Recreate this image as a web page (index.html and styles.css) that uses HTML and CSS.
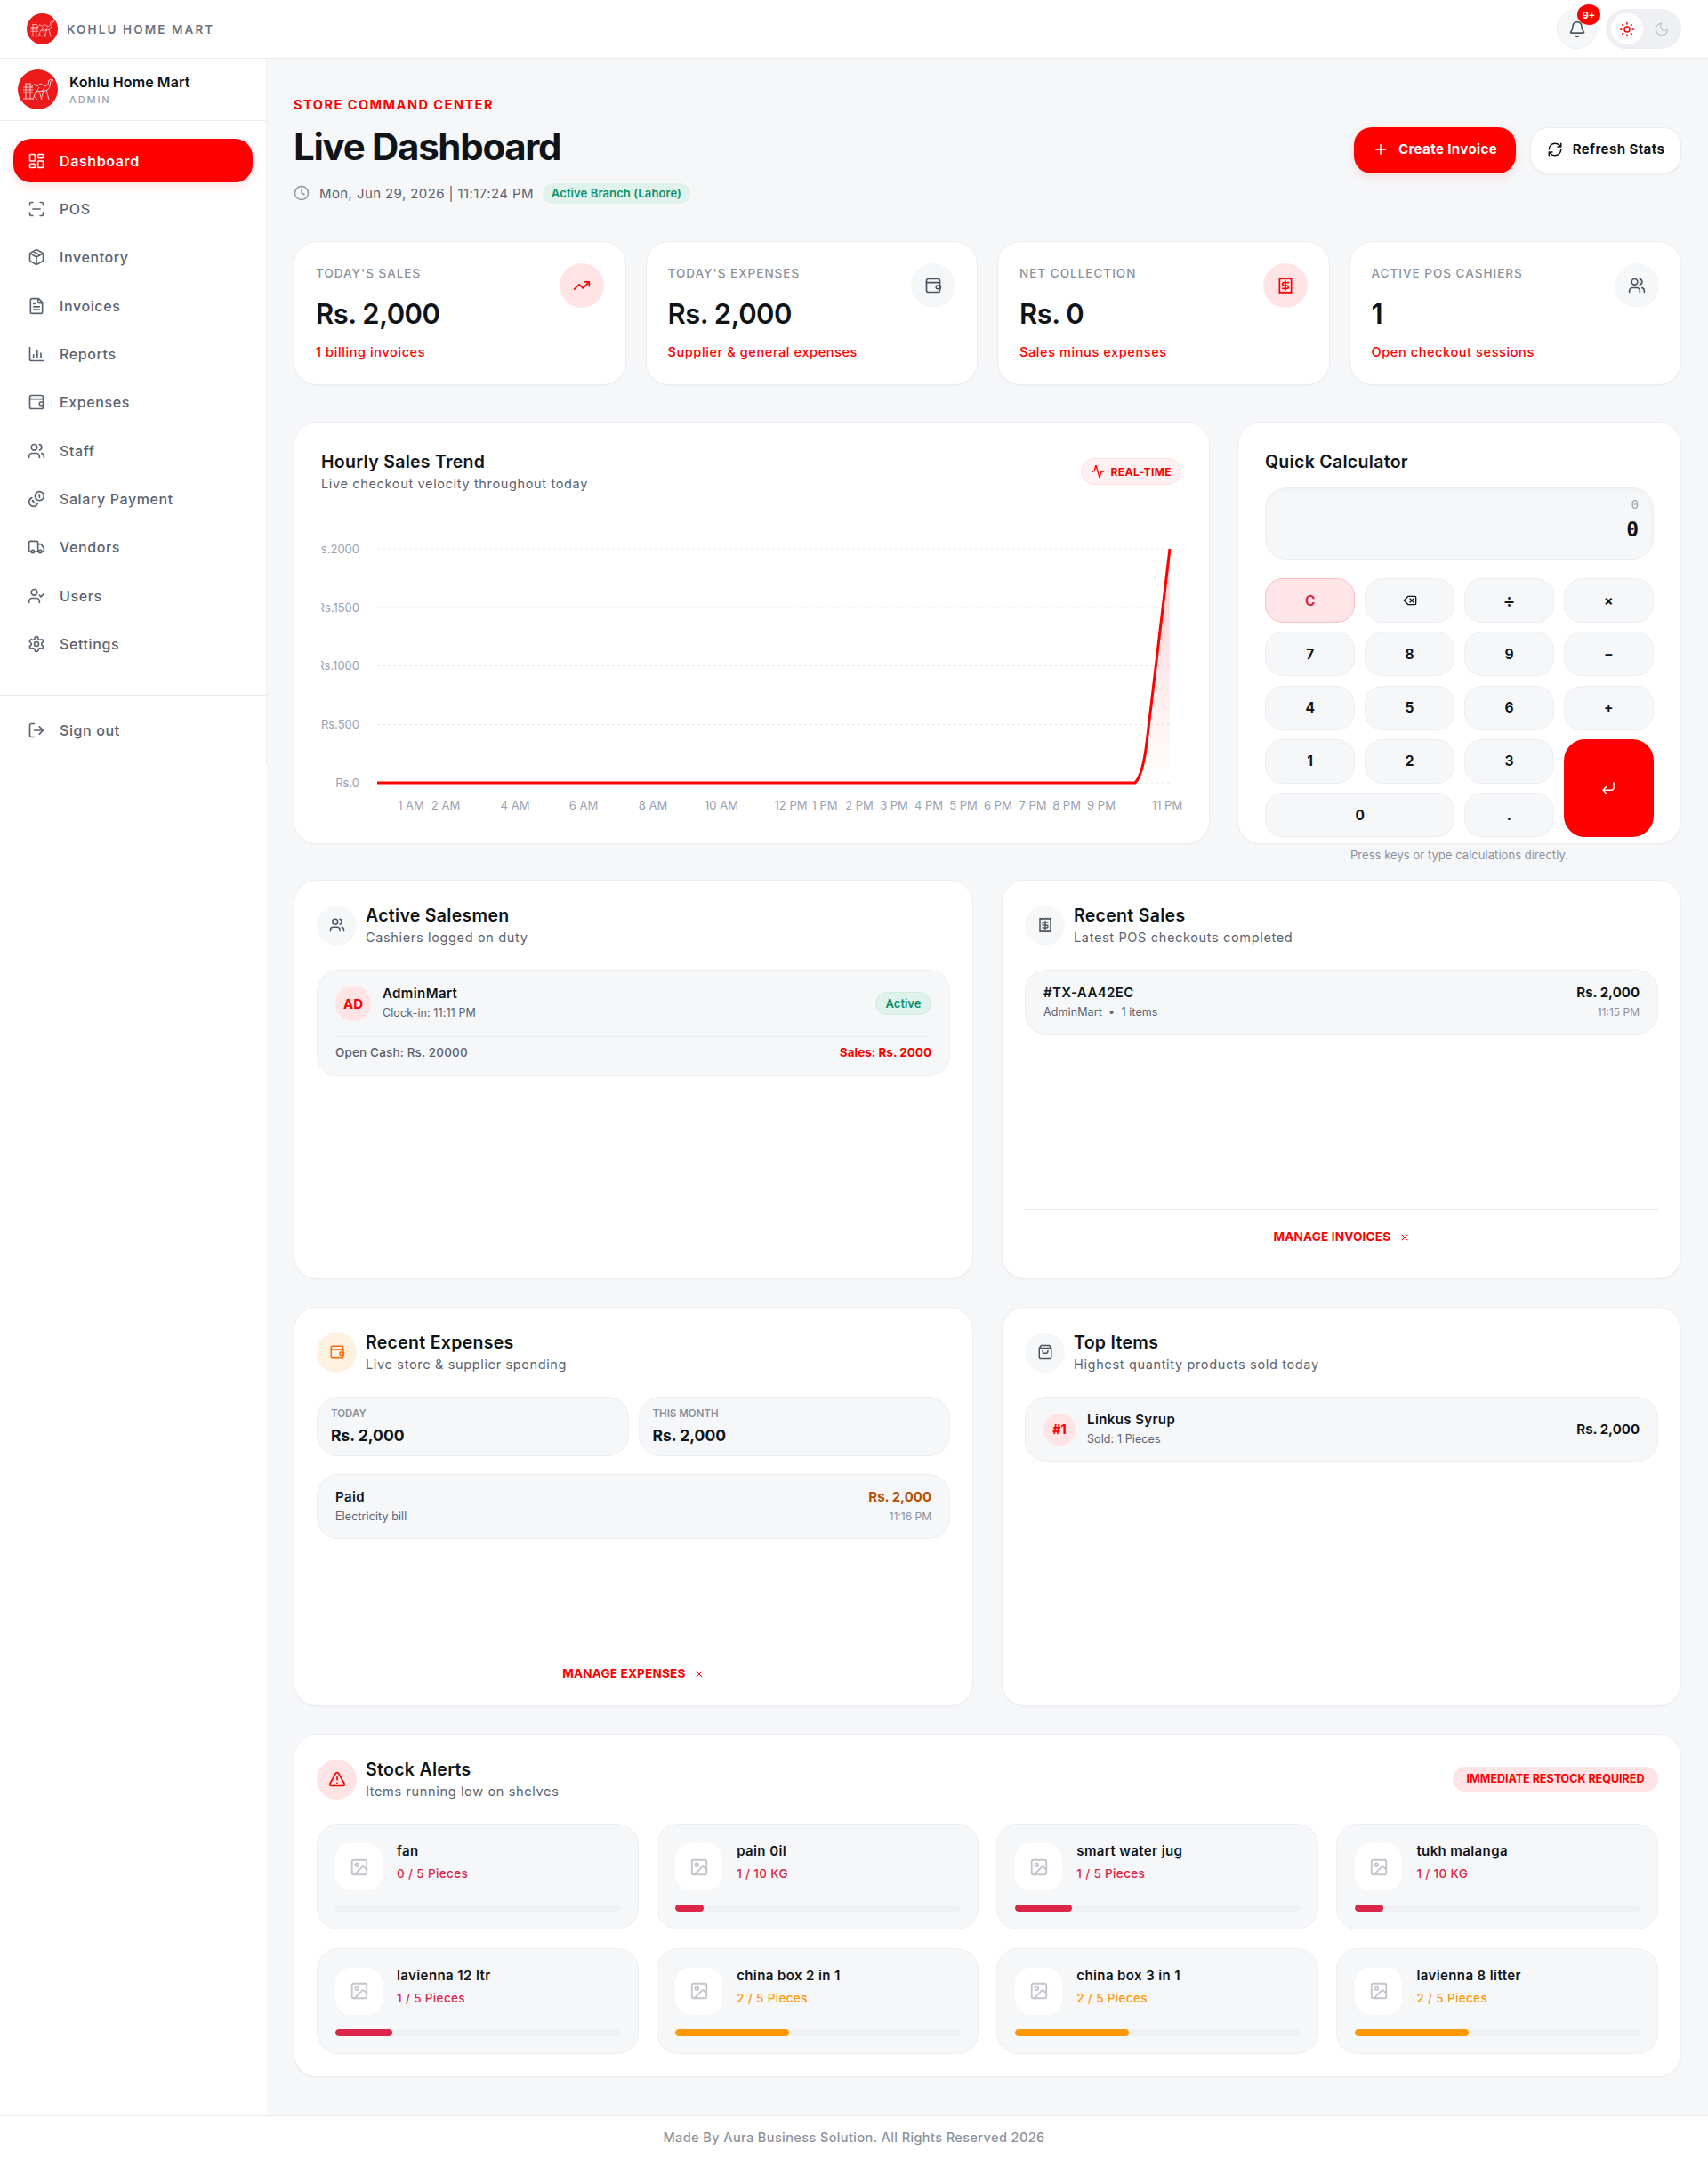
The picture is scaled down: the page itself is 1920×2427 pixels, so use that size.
FILE: index.html
```html
<!DOCTYPE html>
<html lang="en">
<head>
    <meta charset="UTF-8">
    <meta name="viewport" content="width=device-width, initial-scale=1.0">
    <title>Kohlu Home Mart - Live Dashboard</title>
    <link rel="stylesheet" href="styles.css">
</head>
<body>
    <!-- Icon sprite -->
    <svg class="sprite" xmlns="http://www.w3.org/2000/svg">
        <symbol id="i-logo" viewBox="0 0 45 45">
            <circle cx="22.5" cy="22.5" r="22.5" fill="#ec1a1a" stroke="none"/>
            <path d="M15 20q4-6 7-1q3-5 7-1q3 2 5-1l1-5 3-1 2 1-3 1-1 6q-1 4-5 5l-11 1M20 25l-3 9M24 25l3 9M29 24l-3 10M32 23l3 11M21 25l3-5M27 25l3-5M6 20h11M6 23h11M6 26h11M8 16h7M9 16v17M14 16v17M6 33h11M18 30l4 4" fill="none" stroke="#ffdede" stroke-width=".9"/>
        </symbol>
        <symbol id="i-dashboard" viewBox="0 0 24 24"><rect x="3" y="3" width="7" height="9" rx="1"/><rect x="14" y="3" width="7" height="5" rx="1"/><rect x="14" y="12" width="7" height="9" rx="1"/><rect x="3" y="16" width="7" height="5" rx="1"/></symbol>
        <symbol id="i-scan" viewBox="0 0 24 24"><path d="M3 7V5a2 2 0 0 1 2-2h2M17 3h2a2 2 0 0 1 2 2v2M21 17v2a2 2 0 0 1-2 2h-2M7 21H5a2 2 0 0 1-2-2v-2M7 12h10"/></symbol>
        <symbol id="i-package" viewBox="0 0 24 24"><path d="m7.5 4.27 9 5.15M21 8a2 2 0 0 0-1-1.73l-7-4a2 2 0 0 0-2 0l-7 4A2 2 0 0 0 3 8v8a2 2 0 0 0 1 1.73l7 4a2 2 0 0 0 2 0l7-4A2 2 0 0 0 21 16ZM3.3 7l8.7 5 8.7-5M12 22V12"/></symbol>
        <symbol id="i-file" viewBox="0 0 24 24"><path d="M15 2H6a2 2 0 0 0-2 2v16a2 2 0 0 0 2 2h12a2 2 0 0 0 2-2V7ZM14 2v4a2 2 0 0 0 2 2h4M10 9H8M16 13H8M16 17H8"/></symbol>
        <symbol id="i-chart" viewBox="0 0 24 24"><path d="M3 3v16a2 2 0 0 0 2 2h16M8 17v-4M13 17V7M18 17v-6"/></symbol>
        <symbol id="i-wallet" viewBox="0 0 24 24"><rect x="3" y="3" width="18" height="18" rx="2.5"/><path d="M3 8h18"/><rect x="16" y="12" width="6" height="4.5" rx="1.5"/></symbol>
        <symbol id="i-users" viewBox="0 0 24 24"><path d="M16 21v-2a4 4 0 0 0-4-4H6a4 4 0 0 0-4 4v2M22 21v-2a4 4 0 0 0-3-3.87M16 3.13a4 4 0 0 1 0 7.75"/><circle cx="9" cy="7" r="4"/></symbol>
        <symbol id="i-coins" viewBox="0 0 24 24"><circle cx="16" cy="8" r="6"/><path d="M5.91 10.37A6 6 0 1 0 13.66 18M15 6h1v4M7.3 13.9l-.7.7 2.8 2.8"/></symbol>
        <symbol id="i-truck" viewBox="0 0 24 24"><path d="M14 18V6a2 2 0 0 0-2-2H4a2 2 0 0 0-2 2v11a1 1 0 0 0 1 1h2M15 18H9M19 18h2a1 1 0 0 0 1-1v-3.65a1 1 0 0 0-.22-.624l-3.48-4.35A1 1 0 0 0 17.52 8H14"/><circle cx="17" cy="18" r="2"/><circle cx="7" cy="18" r="2"/></symbol>
        <symbol id="i-usercheck" viewBox="0 0 24 24"><path d="M16 21v-2a4 4 0 0 0-4-4H6a4 4 0 0 0-4 4v2M16 11l2 2 4-4"/><circle cx="9" cy="7" r="4"/></symbol>
        <symbol id="i-settings" viewBox="0 0 24 24"><path d="M12.22 2h-.44a2 2 0 0 0-2 2v.18a2 2 0 0 1-1 1.73l-.43.25a2 2 0 0 1-2 0l-.15-.08a2 2 0 0 0-2.73.73l-.22.38a2 2 0 0 0 .73 2.73l.15.1a2 2 0 0 1 1 1.72v.51a2 2 0 0 1-1 1.74l-.15.09a2 2 0 0 0-.73 2.73l.22.38a2 2 0 0 0 2.73.73l.15-.08a2 2 0 0 1 2 0l.43.25a2 2 0 0 1 1 1.73V20a2 2 0 0 0 2 2h.44a2 2 0 0 0 2-2v-.18a2 2 0 0 1 1-1.73l.43-.25a2 2 0 0 1 2 0l.15.08a2 2 0 0 0 2.73-.73l.22-.39a2 2 0 0 0-.73-2.73l-.15-.08a2 2 0 0 1-1-1.74v-.5a2 2 0 0 1 1-1.74l.15-.09a2 2 0 0 0 .73-2.73l-.22-.38a2 2 0 0 0-2.73-.73l-.15.08a2 2 0 0 1-2 0l-.43-.25a2 2 0 0 1-1-1.73V4a2 2 0 0 0-2-2z"/><circle cx="12" cy="12" r="3"/></symbol>
        <symbol id="i-logout" viewBox="0 0 24 24"><path d="M9 21H5a2 2 0 0 1-2-2V5a2 2 0 0 1 2-2h4M16 17l5-5-5-5M21 12H9"/></symbol>
        <symbol id="i-trend" viewBox="0 0 24 24"><path d="m22 7-8.5 8.5-5-5L2 17M16 7h6v6"/></symbol>
        <symbol id="i-receipt" viewBox="0 0 24 24"><path d="M4 2v20l2-1 2 1 2-1 2 1 2-1 2 1 2-1 2 1V2l-2 1-2-1-2 1-2-1-2 1-2-1-2 1ZM16 8h-6a2 2 0 1 0 0 4h4a2 2 0 1 1 0 4H8M12 18V6"/></symbol>
        <symbol id="i-bell" viewBox="0 0 24 24"><path d="M10.268 21a2 2 0 0 0 3.464 0M3.262 15.326A1 1 0 0 0 4 17h16a1 1 0 0 0 .74-1.673C19.41 13.956 18 12.499 18 8A6 6 0 0 0 6 8c0 4.499-1.411 5.956-2.738 7.326"/></symbol>
        <symbol id="i-sun" viewBox="0 0 24 24"><circle cx="12" cy="12" r="4"/><path d="M12 2v2M12 20v2M4.93 4.93l1.41 1.41M17.66 17.66l1.41 1.41M2 12h2M20 12h2M6.34 17.66l-1.41 1.41M19.07 4.93l-1.41 1.41"/></symbol>
        <symbol id="i-moon" viewBox="0 0 24 24"><path d="M12 3a6 6 0 0 0 9 9 9 9 0 1 1-9-9Z"/></symbol>
        <symbol id="i-plus" viewBox="0 0 24 24"><path d="M5 12h14M12 5v14"/></symbol>
        <symbol id="i-refresh" viewBox="0 0 24 24"><path d="M3 12a9 9 0 0 1 9-9 9.75 9.75 0 0 1 6.74 2.74L21 8M21 3v5h-5M21 12a9 9 0 0 1-9 9 9.75 9.75 0 0 1-6.74-2.74L3 16M8 16H3v5"/></symbol>
        <symbol id="i-clock" viewBox="0 0 24 24"><circle cx="12" cy="12" r="10"/><path d="M12 6v6l4 2"/></symbol>
        <symbol id="i-activity" viewBox="0 0 24 24"><path d="M22 12h-2.48a2 2 0 0 0-1.93 1.46l-2.35 8.36a.25.25 0 0 1-.48 0L9.24 2.18a.25.25 0 0 0-.48 0l-2.35 8.36A2 2 0 0 1 4.49 12H2"/></symbol>
        <symbol id="i-delete" viewBox="0 0 24 24"><path d="M20 5H9l-7 7 7 7h11a2 2 0 0 0 2-2V7a2 2 0 0 0-2-2ZM18 9l-6 6M12 9l6 6"/></symbol>
        <symbol id="i-enter" viewBox="0 0 24 24"><path d="M20 4v7a4 4 0 0 1-4 4H4M9 10l-5 5 5 5"/></symbol>
        <symbol id="i-bag" viewBox="0 0 24 24"><path d="M6 2 3 6v14a2 2 0 0 0 2 2h14a2 2 0 0 0 2-2V6l-3-4ZM3 6h18M16 10a4 4 0 0 1-8 0"/></symbol>
        <symbol id="i-alert" viewBox="0 0 24 24"><path d="m21.73 18-8-14a2 2 0 0 0-3.48 0l-8 14A2 2 0 0 0 4 21h16a2 2 0 0 0 1.73-3M12 9v4M12 17h.01"/></symbol>
        <symbol id="i-image" viewBox="0 0 24 24"><rect x="3" y="3" width="18" height="18" rx="2"/><circle cx="9" cy="9" r="2"/><path d="m21 15-3.086-3.086a2 2 0 0 0-2.828 0L6 21"/></symbol>
        <symbol id="i-x" viewBox="0 0 24 24"><path d="M18 6 6 18M6 6l12 12"/></symbol>
    </svg>

    <header class="topbar">
        <div class="brand">
            <svg class="brand-logo"><use href="#i-logo"/></svg>
            <span class="brand-name">KOHLU HOME MART</span>
        </div>
        <div class="topbar-actions">
            <div class="bell-btn">
                <svg class="icon icon-20"><use href="#i-bell"/></svg>
                <span class="bell-badge">9+</span>
            </div>
            <div class="theme-toggle">
                <span class="theme-knob"><svg class="icon icon-18"><use href="#i-sun"/></svg></span>
                <svg class="icon icon-18 theme-moon"><use href="#i-moon"/></svg>
            </div>
        </div>
    </header>

    <div class="shell">
        <aside class="sidebar">
            <div class="sidebar-inner">
                <div class="profile">
                    <svg class="profile-logo"><use href="#i-logo"/></svg>
                    <div>
                        <div class="profile-name">Kohlu Home Mart</div>
                        <div class="profile-role">ADMIN</div>
                    </div>
                </div>
                <nav class="nav">
                    <a class="nav-item active"><svg class="icon icon-20"><use href="#i-dashboard"/></svg>Dashboard</a>
                    <a class="nav-item"><svg class="icon icon-20"><use href="#i-scan"/></svg>POS</a>
                    <a class="nav-item"><svg class="icon icon-20"><use href="#i-package"/></svg>Inventory</a>
                    <a class="nav-item"><svg class="icon icon-20"><use href="#i-file"/></svg>Invoices</a>
                    <a class="nav-item"><svg class="icon icon-20"><use href="#i-chart"/></svg>Reports</a>
                    <a class="nav-item"><svg class="icon icon-20"><use href="#i-wallet"/></svg>Expenses</a>
                    <a class="nav-item"><svg class="icon icon-20"><use href="#i-users"/></svg>Staff</a>
                    <a class="nav-item"><svg class="icon icon-20"><use href="#i-coins"/></svg>Salary Payment</a>
                    <a class="nav-item"><svg class="icon icon-20"><use href="#i-truck"/></svg>Vendors</a>
                    <a class="nav-item"><svg class="icon icon-20"><use href="#i-usercheck"/></svg>Users</a>
                    <a class="nav-item"><svg class="icon icon-20"><use href="#i-settings"/></svg>Settings</a>
                </nav>
                <div class="nav-bottom">
                    <a class="nav-item"><svg class="icon icon-20"><use href="#i-logout"/></svg>Sign out</a>
                </div>
            </div>
        </aside>

        <main class="main">
            <section class="page-head">
                <div>
                    <div class="eyebrow">STORE COMMAND CENTER</div>
                    <h1>Live Dashboard</h1>
                    <div class="date-row">
                        <svg class="icon icon-18 muted"><use href="#i-clock"/></svg>
                        <span>Mon, Jun 29, 2026 | 11:17:24 PM</span>
                        <span class="branch-chip">Active Branch (Lahore)</span>
                    </div>
                </div>
                <div class="head-actions">
                    <button class="btn btn-red"><svg class="icon icon-18"><use href="#i-plus"/></svg>Create Invoice</button>
                    <button class="btn btn-white"><svg class="icon icon-18"><use href="#i-refresh"/></svg>Refresh Stats</button>
                </div>
            </section>

            <section class="stats">
                <div class="stat-card">
                    <div>
                        <div class="stat-label">TODAY'S SALES</div>
                        <div class="stat-value">Rs. 2,000</div>
                        <div class="stat-sub">1 billing invoices</div>
                    </div>
                    <div class="round round-50 round-red"><svg class="icon icon-20"><use href="#i-trend"/></svg></div>
                </div>
                <div class="stat-card">
                    <div>
                        <div class="stat-label">TODAY'S EXPENSES</div>
                        <div class="stat-value">Rs. 2,000</div>
                        <div class="stat-sub">Supplier &amp; general expenses</div>
                    </div>
                    <div class="round round-50 round-grey"><svg class="icon icon-20"><use href="#i-wallet"/></svg></div>
                </div>
                <div class="stat-card">
                    <div>
                        <div class="stat-label">NET COLLECTION</div>
                        <div class="stat-value">Rs. 0</div>
                        <div class="stat-sub">Sales minus expenses</div>
                    </div>
                    <div class="round round-50 round-red"><svg class="icon icon-20"><use href="#i-receipt"/></svg></div>
                </div>
                <div class="stat-card">
                    <div>
                        <div class="stat-label">ACTIVE POS CASHIERS</div>
                        <div class="stat-value">1</div>
                        <div class="stat-sub">Open checkout sessions</div>
                    </div>
                    <div class="round round-50 round-grey"><svg class="icon icon-20"><use href="#i-users"/></svg></div>
                </div>
            </section>

            <section class="chart-row">
                <div class="card chart-card">
                    <div class="chart-head">
                        <div>
                            <div class="card-title">Hourly Sales Trend</div>
                            <div class="card-sub">Live checkout velocity throughout today</div>
                        </div>
                        <span class="realtime"><svg class="icon icon-16"><use href="#i-activity"/></svg>REAL-TIME</span>
                    </div>
                    <svg class="chart" viewBox="0 0 968 350">
                        <defs>
                            <linearGradient id="chartFill" x1="0" y1="0" x2="0" y2="1">
                                <stop offset="0" stop-color="#ff0000" stop-opacity="0.18"/>
                                <stop offset="1" stop-color="#ff0000" stop-opacity="0"/>
                            </linearGradient>
                        </defs>
                        <g class="chart-grid">
                            <line x1="63" y1="42" x2="954" y2="42"/>
                            <line x1="63" y1="108" x2="954" y2="108"/>
                            <line x1="63" y1="173.5" x2="954" y2="173.5"/>
                            <line x1="63" y1="239.5" x2="954" y2="239.5"/>
                            <line x1="63" y1="305" x2="954" y2="305"/>
                        </g>
                        <g class="chart-y">
                            <text x="43" y="47">Rs.2000</text>
                            <text x="43" y="113">Rs.1500</text>
                            <text x="43" y="178">Rs.1000</text>
                            <text x="43" y="244">Rs.500</text>
                            <text x="43" y="310">Rs.0</text>
                        </g>
                        <g class="chart-x">
                            <text x="101" y="335">1 AM</text>
                            <text x="140" y="335">2 AM</text>
                            <text x="218" y="335">4 AM</text>
                            <text x="295" y="335">6 AM</text>
                            <text x="373" y="335">8 AM</text>
                            <text x="450" y="335">10 AM</text>
                            <text x="528" y="335">12 PM</text>
                            <text x="566" y="335">1 PM</text>
                            <text x="605" y="335">2 PM</text>
                            <text x="644" y="335">3 PM</text>
                            <text x="683" y="335">4 PM</text>
                            <text x="722" y="335">5 PM</text>
                            <text x="761" y="335">6 PM</text>
                            <text x="800" y="335">7 PM</text>
                            <text x="838" y="335">8 PM</text>
                            <text x="877" y="335">9 PM</text>
                            <text x="951" y="335">11 PM</text>
                        </g>
                        <path class="chart-area" d="M915 305C920 300 925 285 928 260C934 205 944 130 954 42V305Z"/>
                        <path class="chart-line" d="M63 305H915C920 300 925 285 928 260C934 205 944 130 954 42"/>
                    </svg>
                </div>

                <div class="calc-wrap">
                    <div class="card calc-card">
                        <div class="card-title">Quick Calculator</div>
                        <div class="calc-display">
                            <div class="calc-expr">0</div>
                            <div class="calc-result">0</div>
                        </div>
                        <div class="keypad">
                            <button class="key key-clear">C</button>
                            <button class="key"><svg class="icon icon-16"><use href="#i-delete"/></svg></button>
                            <button class="key key-divide">÷</button>
                            <button class="key">×</button>
                            <button class="key">7</button>
                            <button class="key">8</button>
                            <button class="key">9</button>
                            <button class="key">–</button>
                            <button class="key">4</button>
                            <button class="key">5</button>
                            <button class="key">6</button>
                            <button class="key">+</button>
                            <button class="key">1</button>
                            <button class="key">2</button>
                            <button class="key">3</button>
                            <button class="key key-enter"><svg class="icon icon-18"><use href="#i-enter"/></svg></button>
                            <button class="key key-wide">0</button>
                            <button class="key">.</button>
                        </div>
                    </div>
                    <div class="calc-note">Press keys or type calculations directly.</div>
                </div>
            </section>

            <section class="panel-grid">
                <div class="card panel">
                    <div class="panel-head">
                        <div class="round round-45 round-grey"><svg class="icon icon-18"><use href="#i-users"/></svg></div>
                        <div>
                            <div class="card-title">Active Salesmen</div>
                            <div class="card-sub">Cashiers logged on duty</div>
                        </div>
                    </div>
                    <div class="box box-salesman">
                        <div class="row-between">
                            <div class="person">
                                <div class="round round-40 round-red person-initials">AD</div>
                                <div>
                                    <div class="row-name">AdminMart</div>
                                    <div class="row-sub">Clock-in: 11:11 PM</div>
                                </div>
                            </div>
                            <span class="active-chip">Active</span>
                        </div>
                        <div class="box-foot">
                            <span>Open Cash: Rs. 20000</span>
                            <span class="red-strong">Sales: Rs. 2000</span>
                        </div>
                    </div>
                </div>

                <div class="card panel">
                    <div class="panel-head">
                        <div class="round round-45 round-grey"><svg class="icon icon-18"><use href="#i-receipt"/></svg></div>
                        <div>
                            <div class="card-title">Recent Sales</div>
                            <div class="card-sub">Latest POS checkouts completed</div>
                        </div>
                    </div>
                    <div class="box box-row">
                        <div>
                            <div class="row-name">#TX-AA42EC</div>
                            <div class="row-sub">AdminMart &nbsp;•&nbsp; 1 items</div>
                        </div>
                        <div class="align-right">
                            <div class="row-amount">Rs. 2,000</div>
                            <div class="row-time">11:15 PM</div>
                        </div>
                    </div>
                    <div class="panel-foot">MANAGE INVOICES <svg class="icon icon-12"><use href="#i-x"/></svg></div>
                </div>

                <div class="card panel">
                    <div class="panel-head">
                        <div class="round round-45 round-orange"><svg class="icon icon-18"><use href="#i-wallet"/></svg></div>
                        <div>
                            <div class="card-title">Recent Expenses</div>
                            <div class="card-sub">Live store &amp; supplier spending</div>
                        </div>
                    </div>
                    <div class="mini-grid">
                        <div class="box mini">
                            <div class="mini-label">TODAY</div>
                            <div class="mini-value">Rs. 2,000</div>
                        </div>
                        <div class="box mini">
                            <div class="mini-label">THIS MONTH</div>
                            <div class="mini-value">Rs. 2,000</div>
                        </div>
                    </div>
                    <div class="box box-row">
                        <div>
                            <div class="row-name">Paid</div>
                            <div class="row-sub">Electricity bill</div>
                        </div>
                        <div class="align-right">
                            <div class="row-amount amount-brown">Rs. 2,000</div>
                            <div class="row-time">11:16 PM</div>
                        </div>
                    </div>
                    <div class="panel-foot tight">MANAGE EXPENSES <svg class="icon icon-12"><use href="#i-x"/></svg></div>
                </div>

                <div class="card panel">
                    <div class="panel-head">
                        <div class="round round-45 round-grey"><svg class="icon icon-18"><use href="#i-bag"/></svg></div>
                        <div>
                            <div class="card-title">Top Items</div>
                            <div class="card-sub">Highest quantity products sold today</div>
                        </div>
                    </div>
                    <div class="box box-row box-center">
                        <div class="person person-tight">
                            <div class="round round-36 round-red rank">#1</div>
                            <div>
                                <div class="row-name">Linkus Syrup</div>
                                <div class="row-sub">Sold: 1 Pieces</div>
                            </div>
                        </div>
                        <div class="row-amount">Rs. 2,000</div>
                    </div>
                </div>
            </section>

            <section class="card stock">
                <div class="stock-head">
                    <div class="panel-head">
                        <div class="round round-45 round-red"><svg class="icon icon-20"><use href="#i-alert"/></svg></div>
                        <div>
                            <div class="card-title">Stock Alerts</div>
                            <div class="card-sub">Items running low on shelves</div>
                        </div>
                    </div>
                    <span class="restock">IMMEDIATE RESTOCK REQUIRED</span>
                </div>
                <div class="stock-grid">
                    <div class="box alert">
                        <div class="alert-top">
                            <div class="thumb"><svg class="icon icon-22"><use href="#i-image"/></svg></div>
                            <div><div class="row-name">fan</div><div class="qty crimson">0 / 5 Pieces</div></div>
                        </div>
                        <div class="bar"><div class="bar-fill fill-crimson w-0"></div></div>
                    </div>
                    <div class="box alert">
                        <div class="alert-top">
                            <div class="thumb"><svg class="icon icon-22"><use href="#i-image"/></svg></div>
                            <div><div class="row-name">pain 0il</div><div class="qty crimson">1 / 10 KG</div></div>
                        </div>
                        <div class="bar"><div class="bar-fill fill-crimson w-10"></div></div>
                    </div>
                    <div class="box alert">
                        <div class="alert-top">
                            <div class="thumb"><svg class="icon icon-22"><use href="#i-image"/></svg></div>
                            <div><div class="row-name">smart water jug</div><div class="qty crimson">1 / 5 Pieces</div></div>
                        </div>
                        <div class="bar"><div class="bar-fill fill-crimson w-20"></div></div>
                    </div>
                    <div class="box alert">
                        <div class="alert-top">
                            <div class="thumb"><svg class="icon icon-22"><use href="#i-image"/></svg></div>
                            <div><div class="row-name">tukh malanga</div><div class="qty crimson">1 / 10 KG</div></div>
                        </div>
                        <div class="bar"><div class="bar-fill fill-crimson w-10"></div></div>
                    </div>
                    <div class="box alert">
                        <div class="alert-top">
                            <div class="thumb"><svg class="icon icon-22"><use href="#i-image"/></svg></div>
                            <div><div class="row-name">lavienna 12 ltr</div><div class="qty crimson">1 / 5 Pieces</div></div>
                        </div>
                        <div class="bar"><div class="bar-fill fill-crimson w-20"></div></div>
                    </div>
                    <div class="box alert">
                        <div class="alert-top">
                            <div class="thumb"><svg class="icon icon-22"><use href="#i-image"/></svg></div>
                            <div><div class="row-name">china box 2 in 1</div><div class="qty orange">2 / 5 Pieces</div></div>
                        </div>
                        <div class="bar"><div class="bar-fill fill-orange w-40"></div></div>
                    </div>
                    <div class="box alert">
                        <div class="alert-top">
                            <div class="thumb"><svg class="icon icon-22"><use href="#i-image"/></svg></div>
                            <div><div class="row-name">china box 3 in 1</div><div class="qty orange">2 / 5 Pieces</div></div>
                        </div>
                        <div class="bar"><div class="bar-fill fill-orange w-40"></div></div>
                    </div>
                    <div class="box alert">
                        <div class="alert-top">
                            <div class="thumb"><svg class="icon icon-22"><use href="#i-image"/></svg></div>
                            <div><div class="row-name">lavienna 8 litter</div><div class="qty orange">2 / 5 Pieces</div></div>
                        </div>
                        <div class="bar"><div class="bar-fill fill-orange w-40"></div></div>
                    </div>
                </div>
            </section>
        </main>
    </div>

    <footer class="footer">Made By Aura Business Solution. All Rights Reserved 2026</footer>
</body>
</html>
```

FILE: styles.css
```css
* {
    box-sizing: border-box;
}
body {
    margin: 0;
    font-family: Inter, "Noto Sans", sans-serif;
    color: #0f1419;
    background-color: #fff;
}
.sprite {
    display: none;
}
.icon {
    fill: none;
    stroke: currentColor;
    stroke-width: 2;
    stroke-linecap: round;
    stroke-linejoin: round;
    flex-shrink: 0;
}
.icon-12 { width: 12px; height: 12px; }
.icon-16 { width: 16px; height: 16px; }
.icon-18 { width: 18px; height: 18px; }
.icon-20 { width: 20px; height: 20px; }
.icon-22 { width: 22px; height: 22px; }
.muted { color: #8f95a1; }

/* Top bar */
.topbar {
    height: 66px;
    padding: 0 30px;
    display: flex;
    justify-content: space-between;
    align-items: center;
    border-bottom: 1px solid #e9ebef;
}
.brand {
    display: flex;
    align-items: center;
    gap: 10px;
}
.brand-logo {
    width: 35px;
    height: 35px;
}
.brand-name {
    font-size: 13.5px;
    font-weight: 600;
    letter-spacing: 2.1px;
    color: #6b7280;
}
.topbar-actions {
    display: flex;
    align-items: center;
    gap: 10px;
}
.bell-btn {
    position: relative;
    width: 45px;
    height: 45px;
    border-radius: 50%;
    background-color: #f6f7f9;
    border: 1px solid #eceef1;
    color: #4b5563;
    display: flex;
    align-items: center;
    justify-content: center;
}
.bell-badge {
    position: absolute;
    top: -6px;
    right: -5px;
    width: 26px;
    height: 23px;
    border-radius: 50%;
    background-color: #ff0000;
    color: #fff;
    font-size: 11px;
    font-weight: 700;
    display: flex;
    align-items: center;
    justify-content: center;
}
.theme-toggle {
    width: 85px;
    height: 45px;
    border-radius: 23px;
    background-color: #eff0f3;
    border: 1px solid #eceef1;
    padding: 0 12px 0 5px;
    display: flex;
    align-items: center;
    justify-content: space-between;
}
.theme-knob {
    width: 36px;
    height: 35px;
    border-radius: 50%;
    background-color: #fff;
    color: #ff0000;
    display: flex;
    align-items: center;
    justify-content: center;
}
.theme-moon {
    color: #c6c9cf;
}

/* Sidebar */
.shell {
    display: flex;
}
.sidebar {
    width: 300px;
    flex-shrink: 0;
    background-color: #fff;
}
.sidebar-inner {
    border-right: 1px solid #eceef1;
    padding-bottom: 15px;
}
.profile {
    height: 70px;
    padding: 0 20px;
    display: flex;
    align-items: center;
    gap: 13px;
    border-bottom: 1px solid #eceef1;
}
.profile-logo {
    width: 45px;
    height: 45px;
}
.profile-name {
    font-size: 16px;
    font-weight: 600;
    line-height: 20px;
    margin-bottom: 2px;
    letter-spacing: 0.1px;
}
.profile-role {
    font-size: 11px;
    font-weight: 500;
    letter-spacing: 1.9px;
    color: #9aa0ab;
    line-height: 16px;
}
.nav {
    padding: 20px 15px 0;
    display: flex;
    flex-direction: column;
    gap: 5.35px;
}
.nav-item {
    height: 49px;
    padding: 0 16px;
    display: flex;
    align-items: center;
    gap: 16px;
    border-radius: 20px;
    font-size: 16px;
    font-weight: 500;
    color: #5b6270;
    letter-spacing: 0.6px;
}
.nav-item.active {
    background-color: #ff0000;
    color: #fff;
    font-weight: 600;
    box-shadow: 0 4px 12px rgba(255, 0, 0, 0.12);
}
.nav-bottom {
    margin-top: 33px;
    padding: 14px 15px 0;
    border-top: 1px solid #e9ebef;
}

/* Main */
.main {
    flex: 1;
    min-width: 0;
    padding: 42px 30px 43px;
    background-color: #f6f7f9;
}
.page-head {
    display: flex;
    justify-content: space-between;
    align-items: center;
}
.eyebrow {
    font-size: 14.5px;
    font-weight: 700;
    line-height: 20px;
    letter-spacing: 1.5px;
    color: #ff0000;
}
h1 {
    margin: 12px 0 0;
    font-size: 42px;
    line-height: 50px;
    font-weight: 700;
    letter-spacing: -1.3px;
}
.date-row {
    margin-top: 15px;
    height: 24px;
    display: flex;
    align-items: center;
    gap: 11px;
    font-size: 15px;
    letter-spacing: 0.4px;
    color: #5b6270;
}
.branch-chip {
    margin-left: -1px;
    padding: 0 10px;
    height: 23px;
    line-height: 23px;
    border-radius: 12px;
    background-color: #dff3ec;
    color: #0e8f6c;
    font-size: 13px;
    font-weight: 600;
    letter-spacing: 0.1px;
}
.head-actions {
    display: flex;
    gap: 16px;
}
.btn {
    height: 52px;
    padding: 0 0 2px;
    border-radius: 20px;
    font-family: inherit;
    font-size: 15px;
    font-weight: 700;
    letter-spacing: 0.4px;
    display: flex;
    align-items: center;
    gap: 11px;
}
.btn-red {
    width: 182px;
    justify-content: center;
    background-color: #ff0000;
    color: #fff;
    border: 0;
    box-shadow: 0 4px 12px rgba(255, 0, 0, 0.12);
}
.btn-white {
    width: 170px;
    justify-content: center;
    background-color: #fff;
    color: #0f1419;
    border: 1px solid #eceef1;
    box-shadow: 0 1px 3px rgba(0, 0, 0, 0.05);
}

/* Stat cards */
.stats {
    margin-top: 42px;
    display: grid;
    grid-template-columns: repeat(4, 1fr);
    gap: 22px;
}
.stat-card,
.card {
    background-color: #fff;
    border: 1px solid #eceef1;
    border-radius: 26px;
    box-shadow: 0 1px 2px rgba(0, 0, 0, 0.03);
}
.stat-card {
    padding: 25px 24px;
    display: flex;
    justify-content: space-between;
    align-items: flex-start;
}
.stat-label {
    font-size: 13.5px;
    line-height: 20px;
    font-weight: 500;
    letter-spacing: 1px;
    color: #8b919c;
}
.stat-value {
    margin-top: 16px;
    font-size: 31px;
    line-height: 40px;
    font-weight: 600;
    letter-spacing: -0.5px;
}
.stat-sub {
    margin-top: 12px;
    font-size: 14.5px;
    line-height: 22px;
    font-weight: 500;
    letter-spacing: 0.6px;
    color: #ff0000;
}
.round {
    border-radius: 50%;
    display: flex;
    align-items: center;
    justify-content: center;
    flex-shrink: 0;
}
.round-50 { width: 50px; height: 50px; margin-top: -1px; }
.round-45 { width: 45px; height: 45px; }
.round-40 { width: 40px; height: 40px; }
.round-36 { width: 36px; height: 36px; }
.round-red { background-color: #ffe3e5; color: #ff0000; }
.round-grey { background-color: #f6f7f9; color: #4b5563; }
.round-orange { background-color: #fff1df; color: #ff6a00; }

/* Chart */
.chart-row {
    margin-top: 41px;
    display: grid;
    grid-template-columns: 1030px 499px;
    gap: 31px;
    align-items: start;
}
.card-title {
    font-size: 19.5px;
    line-height: 28px;
    font-weight: 600;
    letter-spacing: 0.3px;
}
.card-sub {
    font-size: 14.5px;
    line-height: 22px;
    letter-spacing: 0.65px;
    color: #5b6270;
}
.chart-card {
    height: 475px;
    padding: 30px 30px 0;
}
.chart-head {
    display: flex;
    justify-content: space-between;
    align-items: center;
}
.realtime {
    height: 30px;
    padding: 0 10px;
    margin-right: 1px;
    border-radius: 15px;
    background-color: #fff0f1;
    border: 1px solid #ffdfe2;
    color: #ff0000;
    font-size: 12px;
    font-weight: 700;
    letter-spacing: 0.4px;
    display: flex;
    align-items: center;
    gap: 7px;
}
.chart {
    display: block;
    width: 968px;
    height: 350px;
    margin-top: 20px;
}
.chart-grid line {
    stroke: #e7e9ed;
    stroke-width: 1;
    stroke-dasharray: 3 3;
}
.chart-y text,
.chart-x text {
    font-size: 13px;
    fill: #98a2b3;
}
.chart-y text {
    text-anchor: end;
}
.chart-x text {
    text-anchor: middle;
}
.chart-area {
    fill: url(#chartFill);
}
.chart-line {
    fill: none;
    stroke: #ff0000;
    stroke-width: 3;
}

/* Calculator */
.calc-card {
    height: 475px;
    padding: 30px 30px 0;
}
.calc-display {
    margin-top: 15px;
    height: 81px;
    padding: 9px 16px 0;
    border-radius: 24px;
    background-color: #f6f7f9;
    border: 1px solid #eceef1;
    box-shadow: inset 0 2px 4px rgba(0, 0, 0, 0.03);
    text-align: right;
    font-family: "DejaVu Sans Mono", monospace;
}
.calc-expr {
    font-size: 14px;
    line-height: 18px;
    color: #a0a5af;
}
.calc-result {
    margin-top: 4px;
    font-size: 23px;
    line-height: 30px;
    font-weight: 700;
}
.keypad {
    margin-top: 21px;
    display: grid;
    grid-template-columns: repeat(4, 1fr);
    grid-auto-rows: 50px;
    gap: 10.25px 10.6px;
}
.key {
    border-radius: 20px;
    border: 1px solid #eceef1;
    background-color: #f6f7f9;
    color: #0f1419;
    font-family: inherit;
    font-size: 15.5px;
    font-weight: 700;
    display: flex;
    align-items: center;
    justify-content: center;
    padding: 0;
}
.key-divide {
    font-size: 21px;
    font-weight: 500;
}
.key-clear {
    background-color: #ffe5e8;
    border-color: #ffbcc2;
    color: #dc2648;
}
.key-enter {
    grid-column: 4;
    grid-row: 4 / span 2;
    background-color: #ff0000;
    border: 0;
    color: #fff;
    border-radius: 24px;
}
.key-wide {
    grid-column: span 2;
}
.calc-note {
    margin-top: 3px;
    font-size: 13px;
    line-height: 18px;
    letter-spacing: 0.05px;
    color: #8b919c;
    text-align: center;
}

/* Panels */
.panel-grid {
    margin-top: 19px;
    display: grid;
    grid-template-columns: 1fr 1fr;
    gap: 31px 32px;
}
.panel {
    height: 449px;
    padding: 25px;
    display: flex;
    flex-direction: column;
}
.panel-head {
    display: flex;
    align-items: center;
    gap: 10px;
}
.box {
    background-color: #f6f7f9;
    border: 1px solid #eceef1;
    border-radius: 24px;
}
.panel-head + .box,
.panel-head + .mini-grid {
    margin-top: 25px;
}
.box-salesman {
    padding: 16px 20px 14px;
}
.row-between {
    display: flex;
    justify-content: space-between;
    align-items: center;
}
.person {
    display: flex;
    align-items: center;
    gap: 13px;
}
.person-tight {
    gap: 13px;
}
.person-initials {
    font-size: 15px;
    font-weight: 700;
}
.rank {
    font-size: 14px;
    font-weight: 800;
}
.row-name {
    font-size: 15px;
    line-height: 20px;
    font-weight: 600;
    letter-spacing: 0.4px;
}
.row-sub {
    margin-top: 2px;
    font-size: 12.5px;
    line-height: 20px;
    letter-spacing: 0.1px;
    color: #5b6270;
}
.active-chip {
    height: 26px;
    width: 63px;
    line-height: 24px;
    text-align: center;
    border-radius: 13px;
    background-color: #dff3ec;
    border: 1px solid #cdece2;
    color: #0e8f6c;
    font-size: 13px;
    font-weight: 600;
}
.box-foot {
    margin-top: 16px;
    padding: 7px 0 2px;
    border-top: 1px solid #eceef1;
    display: flex;
    justify-content: space-between;
    font-size: 13.5px;
    line-height: 20px;
    font-weight: 500;
    letter-spacing: 0.15px;
    color: #5b6270;
}
.red-strong {
    color: #ff0000;
    font-weight: 700;
    letter-spacing: 0;
}
.box-row {
    height: 73px;
    padding: 15px 20px 0;
    display: flex;
    justify-content: space-between;
}
.box-center {
    padding-top: 0;
    align-items: center;
}
.align-right {
    text-align: right;
}
.row-amount {
    font-size: 15px;
    line-height: 20px;
    font-weight: 700;
}
.amount-brown {
    color: #b84e00;
}
.row-time {
    margin-top: 2px;
    font-size: 12px;
    line-height: 20px;
    color: #8b919c;
}
.panel-foot {
    margin-top: auto;
    padding: 20px 0 12px;
    border-top: 1px solid #e9ebef;
    text-align: center;
    font-size: 13.5px;
    line-height: 20px;
    font-weight: 700;
    letter-spacing: 0.2px;
    color: #ff0000;
}
.panel-foot .icon {
    margin-left: 6px;
    vertical-align: -2px;
}
.panel-foot.tight {
    padding: 19px 0 1px;
}
.mini-grid {
    display: grid;
    grid-template-columns: 1fr 1fr;
    gap: 11px;
    margin-bottom: 20px;
}
.mini {
    height: 67px;
    padding: 9px 15px 0;
}
.mini-label {
    font-size: 11.5px;
    line-height: 18px;
    font-weight: 600;
    color: #8b919c;
}
.mini-value {
    margin-top: 3px;
    font-size: 17.5px;
    line-height: 26px;
    font-weight: 700;
}

/* Stock alerts */
.stock {
    margin-top: 31px;
    padding: 25px;
}
.stock-head {
    display: flex;
    justify-content: space-between;
    align-items: center;
}
.restock {
    height: 28px;
    line-height: 28px;
    width: 231px;
    text-align: center;
    border-radius: 14px;
    background-color: #ffe3e5;
    color: #ff0000;
    font-size: 12.5px;
    font-weight: 700;
}
.stock-grid {
    margin-top: 25px;
    display: grid;
    grid-template-columns: repeat(4, 1fr);
    gap: 20.5px;
}
.alert {
    padding: 21px 20px 19px;
}
.alert-top {
    display: flex;
    gap: 16px;
}
.thumb {
    width: 53px;
    height: 53px;
    border-radius: 18px;
    background-color: #fff;
    color: #c2c5cc;
    display: flex;
    align-items: center;
    justify-content: center;
}
.qty {
    margin-top: 5px;
    font-size: 13.5px;
    line-height: 20px;
    font-weight: 500;
    letter-spacing: 0.35px;
}
.alert .row-name {
    margin-top: -1px;
}
.crimson { color: #dc2648; }
.orange { color: #ff9800; }
.bar {
    margin-top: 16px;
    height: 8px;
    border-radius: 4px;
    background-color: #eff0f3;
    overflow: hidden;
}
.bar-fill {
    height: 100%;
    border-radius: 4px;
}
.fill-crimson { background-color: #dc2648; }
.fill-orange { background-color: #ff9800; }
.w-0 { width: 0; }
.w-10 { width: 10%; }
.w-20 { width: 20%; }
.w-40 { width: 40%; }

/* Footer */
.footer {
    height: 50px;
    line-height: 48px;
    border-top: 1px solid #e9ebef;
    text-align: center;
    font-size: 14.5px;
    font-weight: 500;
    letter-spacing: 0.4px;
    color: #8b919c;
}
```
